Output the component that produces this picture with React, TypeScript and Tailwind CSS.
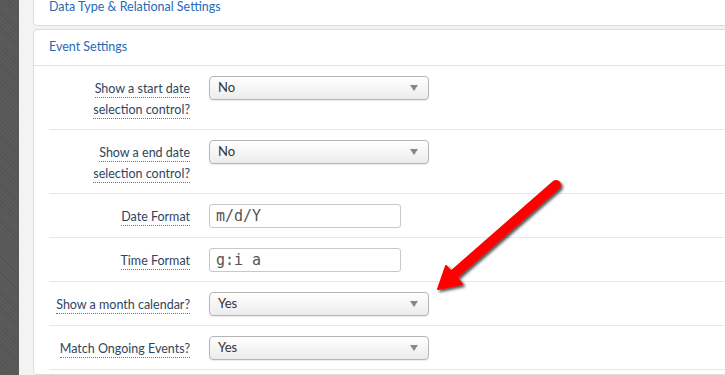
const font = { fontFamily: "Lato, 'Open Sans', sans-serif" };

type Row =
  | { label: string[]; kind: "select"; value: string; tall?: boolean }
  | { label: string[]; kind: "input"; value: string };

const rows: Row[] = [
  { label: ["Show a start date", "selection control?"], kind: "select", value: "No", tall: true },
  { label: ["Show a end date", "selection control?"], kind: "select", value: "No", tall: true },
  { label: ["Date Format"], kind: "input", value: "m/d/Y" },
  { label: ["Time Format"], kind: "input", value: "g:i a" },
  { label: ["Show a month calendar?"], kind: "select", value: "Yes" },
  { label: ["Match Ongoing Events?"], kind: "select", value: "Yes" },
];

const FakeSelect = ({ value }: { value: string }) => (
  <div className="flex h-[24px] w-[220px] items-center justify-between rounded-[4px] border border-[#b5b5b5] bg-gradient-to-b from-white to-[#ececec] pl-[8px] pr-[10px] text-[13px] text-[#333] shadow-[0_1px_1px_rgba(0,0,0,0.08)]">
    <span style={font}>{value}</span>
    <svg width="8" height="6" viewBox="0 0 8 6">
      <path d="M0 0 L8 0 L4 6 Z" fill="#888" />
    </svg>
  </div>
);

const FakeInput = ({ value }: { value: string }) => (
  <div
    className="flex h-[24px] w-[192px] items-center rounded-[3px] border border-[#c8c8c8] bg-white pl-[6px] text-[15px] text-[#555]"
    style={{ fontFamily: "'DejaVu Sans Mono', 'Liberation Mono', monospace" }}
  >
    {value}
  </div>
);

export default function App() {
  return (
    <div className="relative flex h-[375px] w-[725px] overflow-hidden bg-[#f3f3f3]" style={font}>
      <div
        className="h-full w-[19px] shrink-0 bg-[#5b5b5b]"
        style={{
          backgroundImage:
            "repeating-linear-gradient(45deg, rgba(0,0,0,0.08) 0 1px, transparent 1px 3px)",
        }}
      />
      <div className="flex flex-1 flex-col gap-[3px] pl-[14px]">
        <div className="-mt-[6px] flex h-[32px] w-[720px] items-start rounded-[4px] border border-[#dcdcdc] bg-white px-[15px] pt-[4px]">
          <span className="text-[12.5px] leading-[16px] text-[#2869b8]">Data Type &amp; Relational Settings</span>
        </div>
        <div className="flex w-[720px] flex-1 flex-col rounded-[4px] border border-[#dcdcdc] bg-white">
          <div className="flex h-[36px] items-center border-b border-[#e4e4e4] px-[15px]">
            <span className="text-[12.5px] text-[#2869b8]">Event Settings</span>
          </div>
          <div className="flex flex-col pl-[15px]">
            {rows.map((r, i) => (
              <div
                key={i}
                className={`flex items-start border-b border-[#e8e8e8] ${r.label.length > 1 ? "h-[64px]" : "h-[44px]"}`}
              >
                <div className="flex w-[141px] shrink-0 flex-col items-end pt-[14px] text-right text-[12.5px] leading-[20px] text-[#2e4660]">
                  {r.label.map((l) => (
                    <span
                      key={l}
                      className="mb-[3px] whitespace-nowrap border-b border-dotted border-[#2f8aa6] leading-[17px]"
                    >
                      {l}
                    </span>
                  ))}
                </div>
                <div className="ml-[19px] pt-[10px]">
                  {r.kind === "select" ? <FakeSelect value={r.value} /> : <FakeInput value={r.value} />}
                </div>
              </div>
            ))}
          </div>
        </div>
      </div>
      <svg className="absolute left-0 top-0" width="725" height="375" viewBox="0 0 725 375">
        <defs>
          <filter id="sh" x="-20%" y="-20%" width="140%" height="140%">
            <feGaussianBlur in="SourceAlpha" stdDeviation="1.5" />
            <feOffset dx="2" dy="2" result="b" />
            <feComponentTransfer>
              <feFuncA type="linear" slope="0.7" />
            </feComponentTransfer>
            <feMerge>
              <feMergeNode />
              <feMergeNode in="SourceGraphic" />
            </feMerge>
          </filter>
        </defs>
        <g filter="url(#sh)">
          <line x1="556" y1="185" x2="452" y2="276" stroke="#f00" strokeWidth="10" strokeLinecap="round" />
          <path d="M438 289 L446 266 L462 284 Z" fill="#f00" stroke="#f00" strokeWidth="2" strokeLinejoin="round" />
        </g>
      </svg>
    </div>
  );
}
